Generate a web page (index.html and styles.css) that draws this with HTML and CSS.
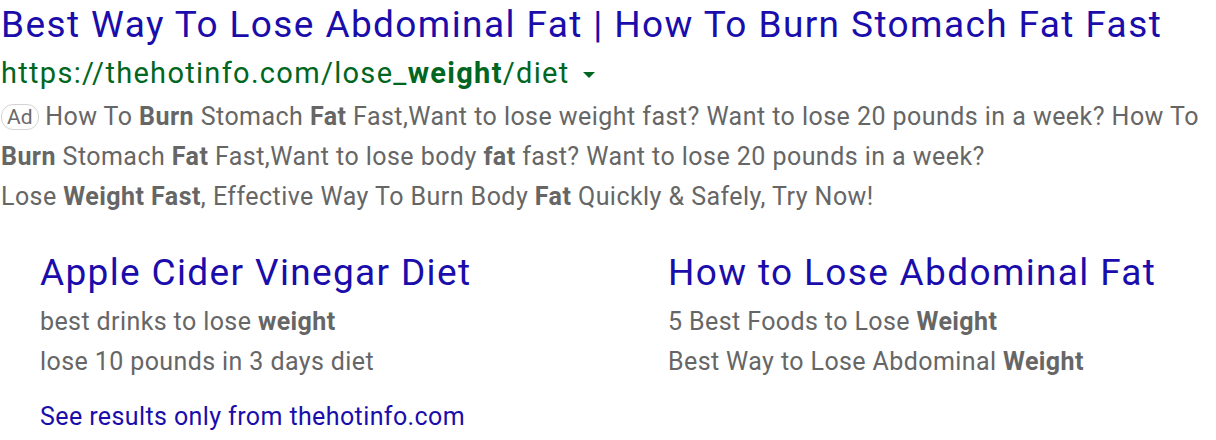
FILE: index.html
```html
<!DOCTYPE html>
<html>
<head>
<meta charset="utf-8">
<link rel="stylesheet" href="styles.css">
</head>
<body>
<div class="ad">
  <a class="title" href="#">Best Way To Lose Abdominal Fat | How To Burn Stomach Fat Fast</a>
  <div class="url"><span>https://thehotinfo.com/lose_<b>weight</b>/diet</span><span class="caret"></span></div>
  <div class="desc">
    <p><span class="badge">Ad</span> How To <b>Burn</b> Stomach <b>Fat</b> Fast,Want to lose weight fast? Want to lose 20 pounds in a week? How To <b>Burn</b> Stomach <b>Fat</b> Fast,Want to lose body <b>fat</b> fast? Want to lose 20 pounds in a week?</p>
    <p>Lose <b>Weight Fast</b>, Effective Way To Burn Body <b>Fat</b> Quickly &amp; Safely, Try Now!</p>
  </div>
  <div class="sitelinks">
    <div class="sitelink">
      <a class="sl-title" href="#">Apple Cider Vinegar Diet</a>
      <div class="sl-line">best drinks to lose <b>weight</b></div>
      <div class="sl-line">lose 10 pounds in 3 days diet</div>
    </div>
    <div class="sitelink">
      <a class="sl-title" href="#">How to Lose Abdominal Fat</a>
      <div class="sl-line">5 Best Foods to Lose <b>Weight</b></div>
      <div class="sl-line">Best Way to Lose Abdominal <b>Weight</b></div>
    </div>
  </div>
  <a class="more" href="#">See results only from thehotinfo.com</a>
</div>
</body>
</html>
```
FILE: styles.css
```css
html, body {
  margin: 0;
  padding: 0;
  background: #fff;
}
body {
  font-family: Roboto, "Liberation Sans", Arial, sans-serif;
}
a {
  text-decoration: none;
}
.ad {
  padding: 0 0 0 1px;
}
.title {
  display: block;
  color: #1a0dab;
  font-size: 37px;
  letter-spacing: 1.4px;
  line-height: 48px;
  margin-top: 1px;
}
.url {
  color: #006621;
  font-size: 29px;
  letter-spacing: 1.3px;
  line-height: 48px;
  display: flex;
  align-items: center;
  gap: 13px;
}
.url b {
  font-weight: 700;
}
.caret {
  width: 0;
  height: 0;
  border-left: 6px solid transparent;
  border-right: 6px solid transparent;
  border-top: 6px solid #006621;
  margin-top: 4px;
}
.desc {
  color: #666;
  font-size: 25px;
  letter-spacing: 0.45px;
  line-height: 40px;
}
.desc p {
  margin: 0;
}
.desc b, .sl-line b {
  color: #666;
}
.badge {
  display: inline-block;
  border: 1px solid #d4d4d4;
  border-radius: 12px;
  font-size: 21px;
  letter-spacing: 0;
  line-height: 24px;
  padding: 0 5px;
  color: #6a6a6a;
  vertical-align: 1px;
}
.sitelinks {
  display: grid;
  grid-template-columns: 628px 1fr;
  padding-left: 39px;
  margin-top: 33px;
}
.sitelink {
  display: flex;
  flex-direction: column;
}
.sl-title {
  color: #1a0dab;
  font-size: 37px;
  letter-spacing: 1.35px;
  line-height: 46px;
  margin-bottom: 6px;
}
.sl-line {
  color: #666;
  font-size: 25px;
  letter-spacing: 0.4px;
  line-height: 40px;
}
.more {
  display: block;
  color: #1a0dab;
  font-size: 25px;
  letter-spacing: 0.4px;
  line-height: 40px;
  padding-left: 39px;
  margin-top: 15px;
}
```
